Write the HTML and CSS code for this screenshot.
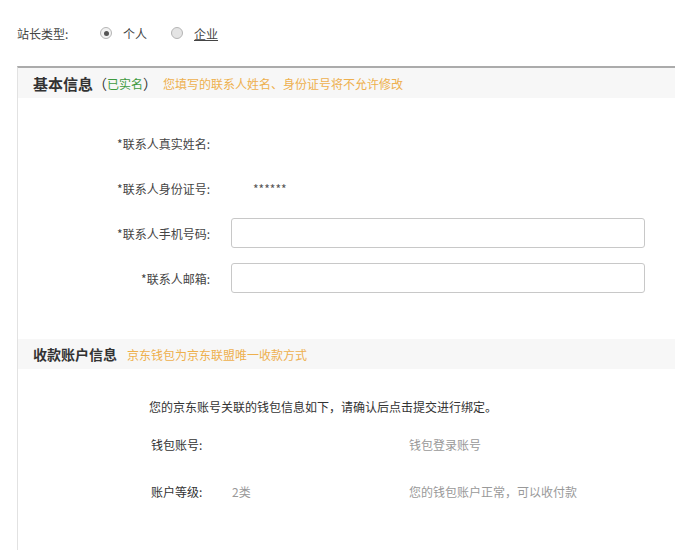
FILE: index.html
```html
<!DOCTYPE html>
<html lang="zh-CN">
<head>
    <meta charset="UTF-8">
    <title>站长信息</title>
    <link rel="stylesheet" href="styles.css">
</head>
<body>
    <div class="site-type">
        <span class="type-label">站长类型:</span>
        <label class="radio-item"><span class="radio checked"></span>个人</label>
        <label class="radio-item"><span class="radio"></span><span class="link">企业</span></label>
    </div>

    <div class="panel">
        <div class="panel-head">
            <span class="head-title big">基本信息</span><span class="verified">（<span class="green">已实名</span>）</span>
            <span class="tip">您填写的联系人姓名、身份证号将不允许修改</span>
        </div>

        <div class="form">
            <div class="form-row">
                <div class="form-label">*联系人真实姓名:</div>
                <div class="form-value"></div>
            </div>
            <div class="form-row">
                <div class="form-label">*联系人身份证号:</div>
                <div class="form-value masked">******</div>
            </div>
            <div class="form-row">
                <div class="form-label">*联系人手机号码:</div>
                <input class="form-input" type="text">
            </div>
            <div class="form-row">
                <div class="form-label">*联系人邮箱:</div>
                <input class="form-input" type="text">
            </div>
        </div>

        <div class="panel-head second">
            <span class="head-title">收款账户信息</span>
            <span class="tip">京东钱包为京东联盟唯一收款方式</span>
        </div>

        <div class="wallet">
            <p class="intro">您的京东账号关联的钱包信息如下，请确认后点击提交进行绑定。</p>
            <div class="wallet-row">
                <span class="w-label">钱包账号:</span>
                <span class="w-value"></span>
                <span class="w-note">钱包登录账号</span>
            </div>
            <div class="wallet-row">
                <span class="w-label">账户等级:</span>
                <span class="w-value">2类</span>
                <span class="w-note">您的钱包账户正常，可以收付款</span>
            </div>
        </div>
    </div>
</body>
</html>
```

FILE: styles.css
```css
body {
    margin: 0;
    font-family: "Noto Sans CJK SC", "Noto Sans", sans-serif;
    font-size: 12px;
    color: #444;
    background-color: #fff;
}
.site-type {
    display: flex;
    align-items: center;
    height: 20px;
    padding: 23px 0 0 17px;
}
.type-label {
    width: 83px;
}
.radio-item {
    display: flex;
    align-items: center;
    margin-right: 24px;
}
.radio {
    width: 10px;
    height: 10px;
    border: 1px solid #b5b5b5;
    border-radius: 50%;
    background-color: #e4e4e4;
    margin-right: 11px;
    position: relative;
}
.radio.checked {
    background-color: #f2f2f2;
}
.radio.checked::after {
    content: "";
    position: absolute;
    left: 2.5px;
    top: 2.5px;
    width: 5px;
    height: 5px;
    border-radius: 50%;
    background-color: #555;
}
.link {
    text-decoration: underline;
}
.panel {
    margin: 23px 0 0 17px;
    border-top: 2px solid #ababab;
    border-left: 1px solid #e2e2e2;
    padding-bottom: 60px;
}
.panel-head {
    display: flex;
    align-items: center;
    height: 30px;
    padding-left: 15px;
    background-color: #f7f7f7;
}
.panel-head.second {
    margin-top: 46px;
}
.head-title {
    font-size: 14px;
    font-weight: bold;
    color: #333;
}
.head-title.big {
    font-size: 15px;
}
.verified {
    font-size: 14px;
    color: #333;
    margin-right: 6px;
}
.green {
    font-size: 12px;
    color: #3f9a3f;
}
.tip {
    color: #eeb04e;
    margin-left: 10px;
}
.verified + .tip {
    margin-left: 0;
}
.form {
    padding-top: 30px;
}
.form-row {
    display: flex;
    align-items: center;
    height: 30px;
    margin-bottom: 15px;
}
.form-label {
    width: 192px;
    text-align: right;
    margin-right: 21px;
}
.form-value.masked {
    padding-left: 22px;
    color: #555;
}
.form-input {
    width: 414px;
    height: 30px;
    box-sizing: border-box;
    border: 1px solid #c8c8c8;
    border-radius: 3px;
    background-color: #fff;
}
.wallet {
    padding-left: 131px;
}
.intro {
    margin: 28px 0 0;
    line-height: 20px;
    color: #333;
}
.wallet-row {
    display: flex;
    line-height: 20px;
    margin-top: 18px;
}
.wallet-row + .wallet-row {
    margin-top: 27px;
}
.w-label {
    width: 81px;
    padding-left: 2px;
    color: #333;
}
.w-value {
    width: 177px;
    color: #999;
}
.w-note {
    color: #999;
}
```
